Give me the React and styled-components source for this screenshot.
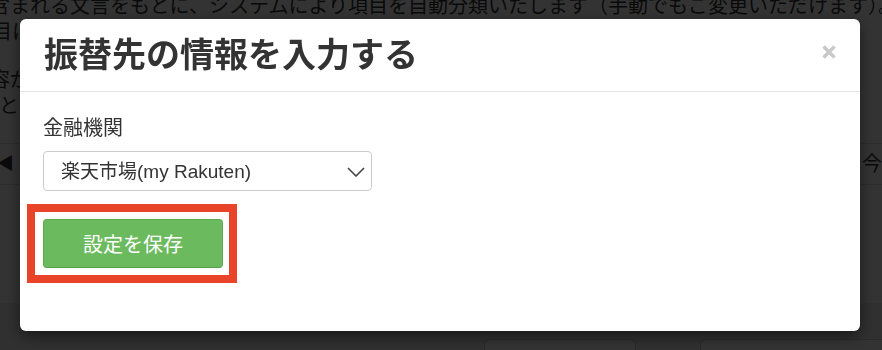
import React from "react";
import styled, { createGlobalStyle } from "styled-components";

const GlobalStyle = createGlobalStyle`
  html, body {
    margin: 0;
    padding: 0;
    background: #fff;
  }
  body {
    font-family: "Liberation Sans", "Noto Sans CJK JP", sans-serif;
    color: #333;
  }
`;

// ---- page behind the dialog ----
const Page = styled.div`
  width: 882px;
  height: 350px;
  overflow: hidden;
  font-size: 20px;
  line-height: 26px;
`;

const Intro = styled.div`
  margin-top: -7px;
`;

const Para = styled.p`
  margin: 0 0 ${(p) => p.$gap || 0}px;
  white-space: nowrap;
  margin-left: ${(p) => p.$shift || 0}px;
`;

const NavRow = styled.div`
  display: flex;
  justify-content: space-between;
  align-items: center;
  height: 40px;
  margin-top: 24px;
  border-top: 1px solid #ddd;
  border-bottom: 1px solid #ddd;
`;

const NavArrow = styled.span`
  font-size: 17px;
  margin-left: -3px;
`;

const NavMonth = styled.span`
  margin-right: -20px;
`;

const Summary = styled.section`
  margin-top: 118px;
  padding-left: 40px;
  background: #eee;
  display: grid;
  grid-template-columns: 190px 210px 240px 234px;
`;

const SummaryCol = styled.div`
  display: flex;
  flex-direction: column;
  align-items: center;
`;

const SummaryLabel = styled.div`
  white-space: nowrap;
  margin-bottom: 10px;
`;

const SummaryValue = styled.div`
  margin-top: 9px;
  font-size: 18px;
`;

const Card = styled.div`
  width: ${(p) => p.$w}px;
  height: 60px;
  background: #fff;
  border: 1px solid #ccc;
  border-radius: 6px;
  box-sizing: border-box;
`;

// ---- dialog ----
const Backdrop = styled.div`
  position: fixed;
  inset: 0;
  background: rgba(0, 0, 0, 0.8);
  padding: 19px 0 0 20px;
`;

const Dialog = styled.div`
  width: 840px;
  background: #fff;
  border-radius: 6px;
  box-shadow: 0 5px 15px rgba(0, 0, 0, 0.5);
`;

const Header = styled.div`
  display: flex;
  justify-content: space-between;
  align-items: center;
  padding: 19px 24px;
  border-bottom: 1px solid #e5e5e5;
`;

const Title = styled.h4`
  margin: 0;
  font-size: 34px;
  line-height: 34px;
  font-weight: bold;
  color: #333;
  white-space: nowrap;
`;

const CloseButton = styled.button`
  align-self: flex-start;
  margin-top: 7px;
  padding: 0;
  border: 0;
  background: none;
  cursor: pointer;
  display: flex;
`;

const Body = styled.div`
  padding: 22px 23px 63px;
`;

const Label = styled.label`
  display: block;
  font-size: 20px;
  line-height: 28px;
  margin-bottom: 9px;
  color: #333;
`;

const SelectWrap = styled.div`
  position: relative;
  width: 329px;
`;

const Select = styled.select`
  appearance: none;
  width: 100%;
  height: 40px;
  box-sizing: border-box;
  padding: 0 40px 0 17px;
  border: 1px solid #ccc;
  border-radius: 4px;
  background: #fff;
  font-family: inherit;
  font-size: 19px;
  color: #333;
`;

const Chevron = styled.svg`
  position: absolute;
  right: 7px;
  top: 16px;
  pointer-events: none;
`;

const Actions = styled.div`
  margin-top: 28px;
`;

const Highlight = styled.div`
  position: relative;
  display: inline-block;
  vertical-align: top;

  &::after {
    content: "";
    position: absolute;
    left: -16px;
    right: -14px;
    top: -15px;
    bottom: -15px;
    border: 8px solid #e9432a;
    pointer-events: none;
  }
`;

const SaveButton = styled.button`
  display: block;
  width: 180px;
  height: 49px;
  box-sizing: border-box;
  border: 1px solid #5eac51;
  border-bottom-color: #55a048;
  border-radius: 4px;
  background: #6cba5e;
  color: #fff;
  font-family: inherit;
  font-size: 20px;
  cursor: pointer;
`;

const columns = [
  { label: "月間収入額", value: "¥0" },
  { label: "月間支出合計額", value: "¥0" },
  { label: "振替金額", card: 152 },
  { label: "純資産額", card: 194 },
];

export default function App() {
  return (
    <>
      <GlobalStyle />
      <Page>
        <Intro>
          <Para $shift={-10}>
            含まれる文言をもとに、システムにより項目を自動分類いたします（手動でもご変更いただけます）。
          </Para>
          <Para $shift={-8} $gap={22}>
            目に関しては、振替先を設定することで集計から除外できます。
          </Para>
          <Para $shift={-10}>容が同じ取引は、次回以降も同じ項目に自動で分類されます。</Para>
          <Para $shift={-1}>とどけ出た口座の情報は、いつでも変更できます。</Para>
        </Intro>
        <NavRow>
          <NavArrow>◀</NavArrow>
          <NavMonth>今月</NavMonth>
        </NavRow>
        <Summary>
          {columns.map((c) => (
            <SummaryCol key={c.label}>
              <SummaryLabel>{c.label}</SummaryLabel>
              {c.card ? <Card $w={c.card} /> : <SummaryValue>{c.value}</SummaryValue>}
            </SummaryCol>
          ))}
        </Summary>
      </Page>

      <Backdrop>
        <Dialog role="dialog">
          <Header>
            <Title>振替先の情報を入力する</Title>
            <CloseButton aria-label="閉じる">
              <svg width="14" height="14" viewBox="0 0 14 14">
                <path d="M1.5 1.5 L12.5 12.5 M12.5 1.5 L1.5 12.5" stroke="#c9c9c9" strokeWidth="3.4" />
              </svg>
            </CloseButton>
          </Header>
          <Body>
            <Label htmlFor="bank">金融機関</Label>
            <SelectWrap>
              <Select id="bank" defaultValue="rakuten">
                <option value="rakuten">楽天市場(my Rakuten)</option>
              </Select>
              <Chevron width="18" height="10" viewBox="0 0 18 10">
                <path d="M1 1 L9 9 L17 1" fill="none" stroke="#444" strokeWidth="1.6" />
              </Chevron>
            </SelectWrap>
            <Actions>
              <Highlight>
                <SaveButton>設定を保存</SaveButton>
              </Highlight>
            </Actions>
          </Body>
        </Dialog>
      </Backdrop>
    </>
  );
}
